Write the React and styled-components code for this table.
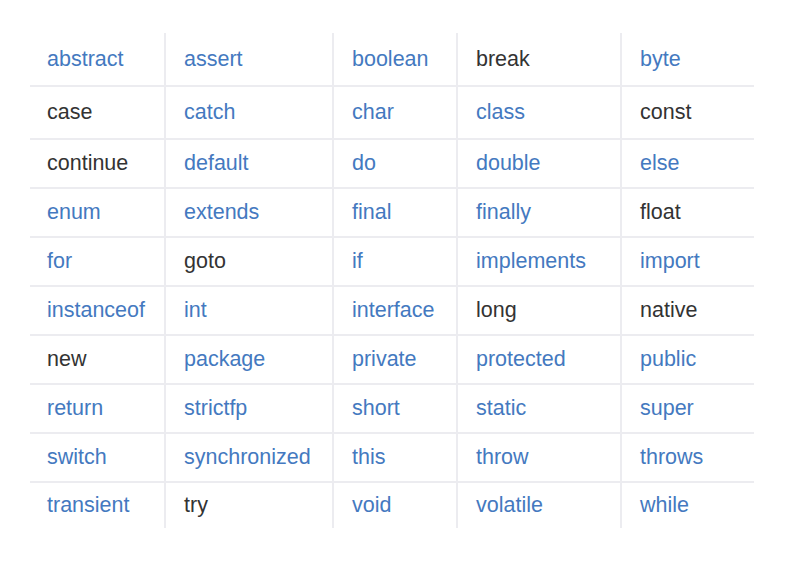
import React from "react";
import styled, { createGlobalStyle } from "styled-components";

const GlobalStyle = createGlobalStyle`
  body {
    margin: 0;
    background: #fff;
  }
`;

const Page = styled.div`
  width: 812px;
  height: 561px;
  padding: 33px 0 0 30px;
  box-sizing: border-box;
  background: #fff;
`;

const Table = styled.div`
  display: grid;
  width: 724px;
  grid-template-columns: 134px 168px 124px 164px 134px;
  grid-template-rows: 52px 53px repeat(7, 49px) 47px;
  font-family: "Liberation Sans", Arial, sans-serif;
  font-size: 21.5px;
`;

const Cell = styled.div`
  display: flex;
  align-items: center;
  padding-left: ${(p) => (p.$col === 0 ? 17 : 18)}px;
  border-left: ${(p) => (p.$col === 0 ? "none" : "2px solid #ececf0")};
  border-top: ${(p) => (p.$row === 0 ? "none" : "2px solid #ececf0")};
  color: ${(p) => (p.$dark ? "#333333" : "#4479c0")};
  white-space: nowrap;
`;

const rows = [
  ["abstract", "assert", "boolean", "break", "byte"],
  ["case", "catch", "char", "class", "const"],
  ["continue", "default", "do", "double", "else"],
  ["enum", "extends", "final", "finally", "float"],
  ["for", "goto", "if", "implements", "import"],
  ["instanceof", "int", "interface", "long", "native"],
  ["new", "package", "private", "protected", "public"],
  ["return", "strictfp", "short", "static", "super"],
  ["switch", "synchronized", "this", "throw", "throws"],
  ["transient", "try", "void", "volatile", "while"],
];

const dark = new Set(["case", "continue", "break", "const", "float", "goto", "long", "native", "new", "try"]);

export default function App() {
  return (
    <Page>
      <GlobalStyle />
      <Table>
        {rows.map((row, r) =>
          row.map((word, c) => (
            <Cell key={word} $row={r} $col={c} $dark={dark.has(word)}>
              {word}
            </Cell>
          ))
        )}
      </Table>
    </Page>
  );
}
